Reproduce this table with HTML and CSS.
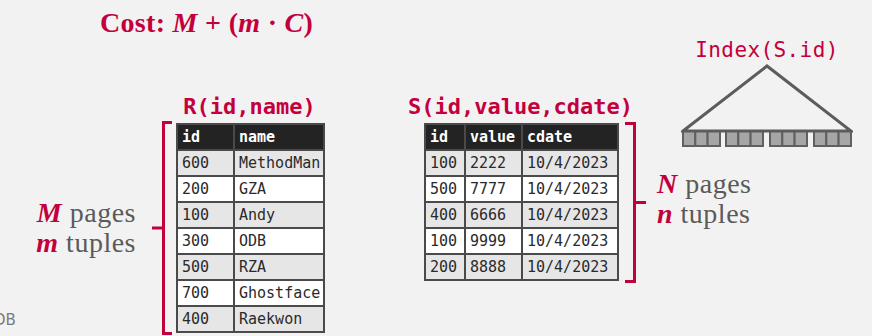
FILE: index.html
```html
<!DOCTYPE html>
<html>
<head>
<meta charset="utf-8">
<link rel="stylesheet" href="styles.css">
</head>
<body>
<div class="slide">
  <div class="cost">Cost: <i>M</i> + (<i>m</i> · <i>C</i>)</div>
  <div class="main">
    <div class="side-left">
      <div class="count count-left"><div><i>M</i> pages</div><div><i>m</i> tuples</div></div>
      <svg class="brace brace-left" width="20" height="214" viewBox="0 0 20 214"><path d="M20 1.5H11.5V212.5H20M0 107H11.5"/></svg>
    </div>
    <div class="rel rel-r">
      <div class="rel-title">R(id,name)</div>
      <table class="tbl tbl-r">
        <thead><tr><th class="w-rid">id</th><th class="w-rname">name</th></tr></thead>
        <tbody>
          <tr><td>600</td><td>MethodMan</td></tr>
          <tr><td>200</td><td>GZA</td></tr>
          <tr><td>100</td><td>Andy</td></tr>
          <tr><td>300</td><td>ODB</td></tr>
          <tr><td>500</td><td>RZA</td></tr>
          <tr><td>700</td><td>Ghostface</td></tr>
          <tr><td>400</td><td>Raekwon</td></tr>
        </tbody>
      </table>
    </div>
    <div class="rel rel-s">
      <div class="rel-title">S(id,value,cdate)</div>
      <table class="tbl tbl-s">
        <thead><tr><th class="w-sid">id</th><th class="w-sval">value</th><th class="w-sdate">cdate</th></tr></thead>
        <tbody>
          <tr><td>100</td><td>2222</td><td>10/4/2023</td></tr>
          <tr><td>500</td><td>7777</td><td>10/4/2023</td></tr>
          <tr><td>400</td><td>6666</td><td>10/4/2023</td></tr>
          <tr><td>100</td><td>9999</td><td>10/4/2023</td></tr>
          <tr><td>200</td><td>8888</td><td>10/4/2023</td></tr>
        </tbody>
      </table>
    </div>
    <svg class="brace brace-right" width="23" height="161" viewBox="0 0 23 161"><path d="M1 1.5H10.5V159.5H1M10.5 80.5H22"/></svg>
    <div class="right">
      <div class="index">
        <div class="index-title">Index(S.id)</div>
        <svg class="tree" width="172" height="84" viewBox="0 0 172 84">
          <g class="leaves">
            <rect x="2" y="67" width="12.3" height="15"/><rect x="14.3" y="67" width="12.3" height="15"/><rect x="26.6" y="67" width="12.4" height="15"/>
            <rect x="45" y="67" width="12.3" height="15"/><rect x="57.3" y="67" width="12.3" height="15"/><rect x="69.6" y="67" width="12.4" height="15"/>
            <rect x="89" y="67" width="12.3" height="15"/><rect x="101.3" y="67" width="12.3" height="15"/><rect x="113.6" y="67" width="12.4" height="15"/>
            <rect x="133" y="67" width="12.3" height="15"/><rect x="145.3" y="67" width="12.3" height="15"/><rect x="157.6" y="67" width="12.4" height="15"/>
          </g>
          <path class="tri" d="M2 67 L86 2 L170 67 Z"/>
        </svg>
      </div>
      <div class="count count-right"><div><i>N</i> pages</div><div><i>n</i> tuples</div></div>
    </div>
  </div>
  <div class="logo">DB</div>
</div>
</body>
</html>
```
FILE: styles.css
```css
body {
  margin: 0;
  background: #f2f2f2;
  width: 872px;
  height: 336px;
  overflow: hidden;
}

.slide {
  position: relative;
  width: 872px;
  height: 336px;
}

.cost {
  padding: 8px 0 0 100px;
  font: bold 28px/30px "Liberation Serif", serif;
  letter-spacing: 0.3px;
  color: #c4003c;
  white-space: nowrap;
}

.cost i {
  font-style: italic;
}

.main {
  display: flex;
  align-items: flex-start;
}

.side-left {
  display: flex;
  align-items: center;
  margin-top: 83px;
}

.count {
  font: 28px/30px "Liberation Serif", serif;
  letter-spacing: 0.5px;
  color: #5a5a5a;
  white-space: nowrap;
}

.count i {
  font-weight: bold;
  color: #c4003c;
}

.count-left {
  width: 152px;
  box-sizing: border-box;
  text-align: right;
  padding-right: 16px;
}

.brace {
  flex: none;
  fill: none;
  stroke: #c4003c;
  stroke-width: 3;
}

.brace-left {
  margin-right: 4px;
}

.rel {
  flex: none;
  display: flex;
  flex-direction: column;
  margin-top: 56px;
}

.rel-r {
  width: 147px;
}

.rel-s {
  width: 193px;
  margin-left: 101px;
}

.rel-title {
  display: flex;
  justify-content: center;
  height: 29px;
  font: bold 22px/26px "DejaVu Sans Mono", monospace;
  color: #c4003c;
  white-space: nowrap;
}

.tbl {
  border-collapse: collapse;
  table-layout: fixed;
  font: 15px/24px "DejaVu Sans Mono", monospace;
  color: #2a2a2a;
}

.tbl-r {
  width: 147px;
}

.tbl-s {
  width: 193px;
}

.tbl th,
.tbl td {
  border: 2px solid #4a4a4a;
  padding: 0 0 0 4px;
  height: 24px;
  text-align: left;
  white-space: nowrap;
  overflow: hidden;
}

.tbl th {
  background: #232323;
  color: #ffffff;
  font-weight: bold;
}

.tbl tbody tr:nth-child(odd) td {
  background: #e6e6e6;
}

.tbl tbody tr:nth-child(even) td {
  background: #ffffff;
}

.w-rid { width: 51px; }
.w-rname { width: 84px; }
.w-sid { width: 34px; }
.w-sval { width: 51px; }
.w-sdate { width: 90px; }

.brace-right {
  margin-left: 7px;
  margin-top: 84px;
}

.right {
  display: flex;
  flex-direction: column;
  align-items: flex-start;
}

.index {
  margin-left: 34px;
  display: flex;
  flex-direction: column;
  align-items: center;
}

.index-title {
  font: 21px/24px "DejaVu Sans Mono", monospace;
  letter-spacing: 0.4px;
  color: #c4003c;
  white-space: nowrap;
}

.tree {
  margin-top: 2px;
}

.leaves rect {
  fill: #a6a6a6;
  stroke: #606060;
  stroke-width: 2;
}

.tri {
  fill: none;
  stroke: #5c5c5c;
  stroke-width: 3;
}

.count-right {
  margin-top: 21px;
  padding-left: 10px;
}

.logo {
  position: absolute;
  left: -6px;
  top: 311px;
  font: 15px/18px "DejaVu Sans", sans-serif;
  color: #7a7a7a;
}
```
